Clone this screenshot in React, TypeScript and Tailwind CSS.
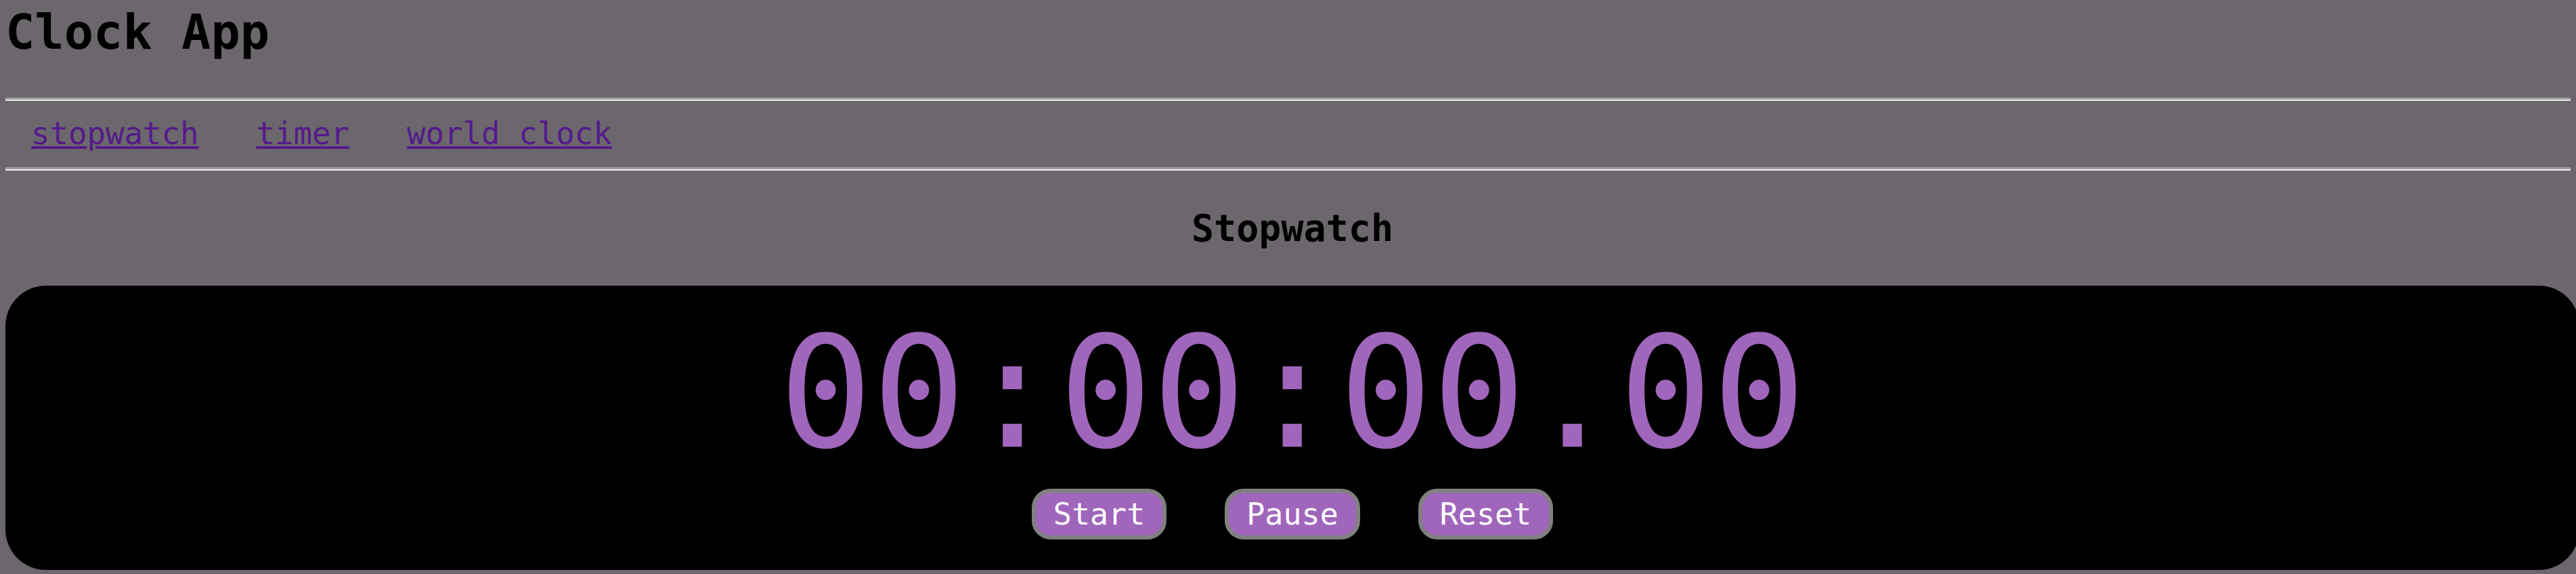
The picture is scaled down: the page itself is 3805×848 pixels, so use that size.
import React from 'react'

const links = ['stopwatch', 'timer', 'world clock']
const controls = ['Start', 'Pause', 'Reset']

function Rule() {
  return <hr className="h-0 border-0 border-t-[3px] border-b-2 border-t-[#9d9b9e] border-b-[#efefef]" />
}

export default function App() {
  return (
    <div className="min-h-screen w-full overflow-hidden bg-[#6b676c] px-2 font-['DejaVu_Sans_Mono',monospace] text-black">
      {/* Header */}
      <h1 className="pt-[11px] text-[72px] font-bold leading-[72px]">Clock App</h1>

      <div className="mt-[61px]">
        <Rule />
      </div>
      <nav className="flex gap-[85px] py-[26px] pl-[38px] text-[45.7px] leading-[46px]">
        {links.map((l) => (
          <a key={l} href="#" className="text-[#551a8b] underline">
            {l}
          </a>
        ))}
      </nav>
      <Rule />

      {/* Stopwatch */}
      <div className="w-[3802px]">
        <h2 className="mt-[58px] text-center text-[55px] font-bold leading-[55px]">Stopwatch</h2>

        <div className="mt-[57px] flex h-[420px] flex-col items-center rounded-[60px] bg-black pt-[46px]">
          <div className="text-[229px] leading-[225px] text-[#a066bb]">00:00:00.00</div>
          <div className="mt-[29px] flex gap-[86px]">
            {controls.map((c) => (
              <button
                key={c}
                className="h-[75px] rounded-[28px] border-[6px] border-[#808080] bg-[#a066bb] px-[26px] text-[45px] leading-[45px] text-white"
              >
                {c}
              </button>
            ))}
          </div>
        </div>
      </div>
    </div>
  )
}
